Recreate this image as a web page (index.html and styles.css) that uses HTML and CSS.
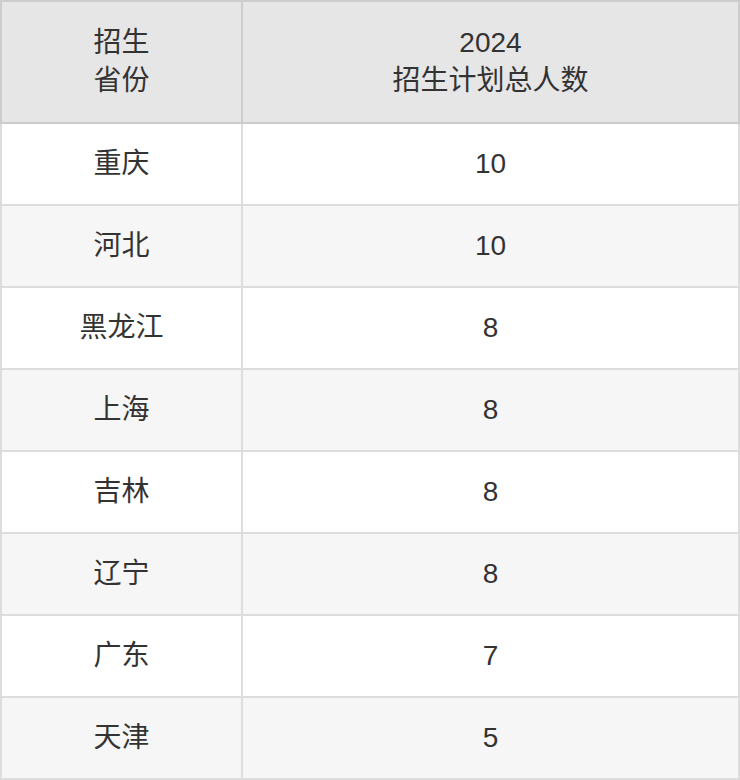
FILE: index.html
```html
<!DOCTYPE html>
<html lang="zh">
<head>
<meta charset="utf-8">
<link rel="stylesheet" href="styles.css">
</head>
<body>
<table class="plan">
  <thead>
    <tr><th class="c1">招生<br>省份</th><th class="c2">2024<br>招生计划总人数</th></tr>
  </thead>
  <tbody>
    <tr><td>重庆</td><td>10</td></tr>
    <tr><td>河北</td><td>10</td></tr>
    <tr><td>黑龙江</td><td>8</td></tr>
    <tr><td>上海</td><td>8</td></tr>
    <tr><td>吉林</td><td>8</td></tr>
    <tr><td>辽宁</td><td>8</td></tr>
    <tr><td>广东</td><td>7</td></tr>
    <tr><td>天津</td><td>5</td></tr>
  </tbody>
</table>
</body>
</html>
```
FILE: styles.css
```css
html, body {
  margin: 0;
  padding: 0;
  background: #fff;
}
.plan {
  border-collapse: collapse;
  width: 740px;
  table-layout: fixed;
  font-family: "Liberation Sans", "Noto Sans CJK SC", sans-serif;
  font-size: 28px;
  color: #333;
}
.plan th, .plan td {
  text-align: center;
  vertical-align: middle;
  padding: 0;
  font-weight: normal;
}
.plan th {
  background: #e6e6e6;
  border: 2px solid #cccccc;
  height: 120px;
  line-height: 38px;
}
.plan .c1 { width: 239px; }
.plan td {
  border: 2px solid #dddddd;
  height: 80px;
  line-height: 32px;
}
.plan tbody tr:nth-child(even) td {
  background: #f6f6f6;
}
```
